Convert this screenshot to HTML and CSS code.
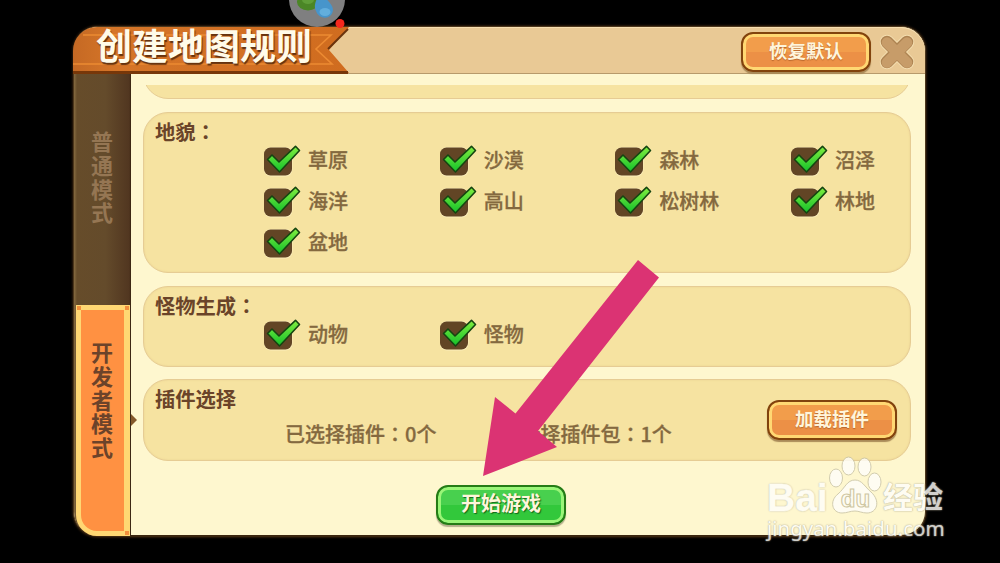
FILE: index.html
```html
<!DOCTYPE html>
<html lang="zh-CN">
<head>
    <meta charset="UTF-8">
    <meta name="viewport" content="width=device-width, initial-scale=1.0">
    <title>创建地图规则</title>
    <link rel="stylesheet" href="styles.css">
</head>
<body>

    <div class="dialog">
        <header class="top">
            <div class="banner">
                <svg class="banner-bg" width="276" height="47" viewBox="0 0 276 47">
                    <defs>
                        <linearGradient id="wood" x1="0" x2="1" y1="0" y2="0">
                            <stop offset="0" stop-color="#c56924"/>
                            <stop offset=".15" stop-color="#d57528"/>
                            <stop offset="1" stop-color="#d06c1f"/>
                        </linearGradient>
                    </defs>
                    <path d="M0 0H276L256 23L276 46H0Z" fill="url(#wood)"/>
                    <path d="M0 45.500H275" stroke="#773709" stroke-width="3"/>
                    <path d="M275 2L255 22" stroke="#69330e" stroke-width="2" fill="none"/>
                    <path d="M10 8H258L243 22L259 37H0" stroke="#ec8a32" stroke-width="1.6" fill="none"/>
                </svg>
                <h1>创建地图规则</h1>
            </div>
            <button class="btn btn-orange">恢复默认</button>
            <svg class="close" width="38" height="38" viewBox="0 0 38 38">
                <path d="M9 9L29 29M29 9L9 29" stroke="#f3dcae" stroke-width="14.500" stroke-linecap="round"/>
                <path d="M9 9L29 29M29 9L9 29" stroke="#ae8452" stroke-width="12.500" stroke-linecap="round"/>
                <path d="M9 9.500L29 29.500M29 9.500L9 29.500" stroke="#c79c69" stroke-width="10.500" stroke-linecap="round"/>
            </svg>
        </header>

        <div class="main">
            <nav class="tabs">
                <div class="tab tab-normal"><span>普通模式</span></div>
                <div class="tab tab-dev">
                    <i class="corner tl"></i><i class="corner tr"></i><i class="corner br"></i>
                    <span>开发者模式</span>
                </div>
            </nav>

            <div class="content">
                <div class="card-cut"></div>

                <section class="card card-land">
                    <h2>地貌<span class="colon" lang="zh-TW">：</span></h2>
                    <div class="checks" id="land"></div>
                </section>

                <section class="card card-mob">
                    <h2>怪物生成<span class="colon" lang="zh-TW">：</span></h2>
                    <div class="checks" id="mob"></div>
                </section>

                <section class="card card-plugin">
                    <h2>插件选择</h2>
                    <div class="plugin-row">
                        <p>已选择插件<span class="colon" lang="zh-TW">：</span>0个</p>
                        <p>已选择插件包<span class="colon" lang="zh-TW">：</span>1个</p>
                    </div>
                    <button class="btn btn-orange btn-load">加载插件</button>
                </section>

                <button class="btn btn-green">开始游戏</button>
            </div>
        </div>
    </div>

    <!-- floating ball -->
    <svg class="ball" width="64" height="32" viewBox="0 0 64 32">
        <circle cx="32" cy="-1" r="28" fill="#7f7f80"/>
        <ellipse cx="23" cy="2" rx="11" ry="8.500" fill="#4b8626"/>
        <ellipse cx="23" cy="0" rx="6" ry="4" fill="#5f9d38"/>
        <path d="M36 -8C29 2 29 7 31 11C34 20 47 20 48 10C48 4 41 0 36 -8Z" fill="#4795cb"/>
        <ellipse cx="40" cy="12" rx="5.500" ry="4" fill="#62aedd"/>
        <circle cx="55" cy="23.500" r="4.500" fill="#f5281e"/>
    </svg>

    <svg class="arrow" width="180" height="220" viewBox="0 0 180 220">
        <path d="M3 216L15 137L35.500 153.500L158 0L179 17.500L58 171L77 187Z" fill="#db3373"/>
    </svg>

    <div class="watermark">
        <div class="wm-logo">
            <span class="wm-bai">Bai</span>
            <svg class="paw" width="54" height="60" viewBox="0 0 54 60">
                <g fill="#fffefa" stroke="#c9c4a8" stroke-width="1">
                    <ellipse cx="8" cy="22" rx="6.500" ry="9"/>
                    <ellipse cx="20.500" cy="10" rx="6.500" ry="9"/>
                    <ellipse cx="36.500" cy="11" rx="6.500" ry="9"/>
                    <ellipse cx="46.500" cy="26" rx="6.500" ry="9"/>
                    <path d="M27 24C34 24 37 31 43 36C53 45 49 57 39 57C34 57 31 55 27 55C22 55 19 57 14 57C4 57 1 45 10 38C17 32 19 24 27 24Z"/>
                </g>
                <text x="27.500" y="51" text-anchor="middle" class="du">du</text>
            </svg>
            <span class="wm-jy">经验</span>
        </div>
        <div class="wm-url">jingyan.baidu.com</div>
    </div>

    <svg width="0" height="0" class="defs">
        <defs>
            <linearGradient id="green" x1="0" x2="0" y1="0" y2="1">
                <stop offset="0" stop-color="#82ee40"/>
                <stop offset="1" stop-color="#12c02a"/>
            </linearGradient>
        </defs>
    </svg>

    <script>
        const land = ["草原", "沙漠", "森林", "沼泽", "海洋", "高山", "松树林", "林地", "盆地"];
        const mob = ["动物", "怪物"];

        function fill(id, names) {
            const box = document.getElementById(id);
            names.forEach(name => {
                const item = document.createElement("label");
                item.className = "check";
                item.innerHTML = `<svg width="38" height="32" viewBox="0 0 38 32">
                    <rect x="1" y="2" width="28.500" height="29.500" rx="7" fill="#fbeebb"/>
                    <rect x="1" y="2.500" width="28" height="28" rx="6.500" fill="#624525"/>
                    <path d="M4.500 14.500L9 10L16 17L32.500 1.300L36.500 5.500L16.500 27Z" fill="url(#green)" stroke="#154510" stroke-width="1.6" stroke-linejoin="round"/>
                </svg><span>${name}</span>`;
                box.appendChild(item);
            });
        }

        fill("land", land);
        fill("mob", mob);
    </script>
</body>
</html>
```
FILE: styles.css
```css
* {
    box-sizing: border-box;
}

body {
    margin: 0;
    height: 563px;
    overflow: hidden;
    background-color: #000;
    font-family: "Noto Sans CJK SC", sans-serif;
    position: relative;
}

h1, h2, p {
    margin: 0;
}

.dialog {
    width: 853px;
    height: 511px;
    margin-left: 73px;
    margin-top: 26px;
    border-radius: 25px;
    display: flex;
    flex-direction: column;
    background-color: #fef7cf;
    border: 1px solid #4d371c;
    border-bottom: 2px solid #3b260f;
    box-shadow: 0 0 2px 1px #2a1a0b;
}

body::before {
    content: "";
    display: table;
}

/* header */
.top {
    height: 47px;
    flex: none;
    display: flex;
    align-items: center;
    background-color: #e9c995;
    border-bottom: 1px solid #b79a6b;
    border-top: 1px solid #f7deb0;
    border-radius: 24px 24px 0 0;
}

.banner {
    width: 276px;
    height: 47px;
    margin-right: auto;
    position: relative;
}

.banner-bg {
    position: absolute;
    left: -1px;
    top: 0;
    border-top-left-radius: 24px;
}

.banner h1 {
    position: relative;
    padding-left: 22px;
    font-size: 36px;
    line-height: 34px;
    font-weight: 700;
    color: #fffbe9;
    text-shadow: 1px 2px 1px #65320f;
    white-space: nowrap;
}

.close {
    margin: 3px 9px 0 7px;
}

.btn {
    width: 130px;
    height: 40px;
    padding: 0 0 5px;
    border-radius: 12px;
    font-family: inherit;
    font-size: 18.5px;
    font-weight: 700;
    line-height: 22px;
    color: #fff5db;
    white-space: nowrap;
}

.btn-orange {
    border: 2px solid #81430d;
    background: linear-gradient(#f29d4b 50%, #ec9046 50%);
    box-shadow: inset 0 0 0 3px #ffd873, 0 2px 1px #a98a58;
    text-shadow: 0 1px 1px #b7662c;
}

.top .btn {
    margin-top: 3px;
}

.btn-green {
    align-self: center;
    margin: 24px 0 0 -52px;
    border: 2px solid #257b16;
    background: linear-gradient(#48d04e 50%, #32c83b 50%);
    box-shadow: inset 0 0 0 3px #9af578, 0 2px 1px #b5ad8b;
    font-size: 20px;
    text-shadow: 1px 1px 1px #13681a;
}

/* left tabs */
.main {
    flex: 1;
    display: flex;
}

.tabs {
    width: 57px;
    flex: none;
    display: flex;
    flex-direction: column;
    background: linear-gradient(90deg, #856a40 0, #664c2a 3px, #644b2b 55%, #513620 97%, #35220f 100%);
    border-bottom-left-radius: 24px;
}

.tab {
    display: flex;
    justify-content: center;
    font-size: 22px;
    font-weight: 700;
    line-height: 22px;
}

.tab span {
    writing-mode: vertical-rl;
    letter-spacing: 1.7px;
}

.tab-normal {
    height: 231px;
    padding-top: 57px;
    padding-right: 1px;
    color: #957653;
}

.tab-dev {
    position: relative;
    height: 231px;
    width: 54px;
    margin-left: 2px;
    padding-top: 32px;
    padding-right: 1px;
    border: 5px solid #ffd773;
    border-right-width: 6px;
    border-bottom-left-radius: 21px;
    background-color: #ff9142;
    color: #6c432a;
}

.corner {
    position: absolute;
    width: 4px;
    height: 4px;
    background-color: #f28f3c;
}

.tl { left: -4px; top: -4px; }
.tr { right: -5px; top: -4px; }
.br { right: -5px; bottom: -4px; }

/* right side */
.content {
    flex: 1;
    display: flex;
    flex-direction: column;
    padding: 11px 15px 0 12px;
    position: relative;
}

/* pointer of the active tab */
.content::before {
    content: "";
    position: absolute;
    left: 0;
    top: 340px;
    border-left: 6px solid #84592b;
    border-top: 6px solid transparent;
    border-bottom: 6px solid transparent;
}

.card, .card-cut {
    width: 768px;
    background-color: #f6e3a1;
    border: 1px solid #e6cc94;
    border-radius: 25px;
}

.card-cut {
    height: 52px;
    flex: none;
    margin-top: -38px;
    margin-bottom: 13px;
    clip-path: inset(38px 0 0 0);
}

.card {
    flex: none;
    position: relative;
    padding: 6px 0 0 11px;
    box-shadow: inset 0 0 2px #e9d190;
}

.card h2 {
    font-size: 20.300px;
    line-height: 24px;
    font-weight: 700;
    color: #6a4429;
}

.colon {
    font-family: "Noto Sans CJK TC", sans-serif;
}

.card-land {
    height: 161px;
    margin-bottom: 13px;
}

.card-mob {
    height: 81px;
    margin-bottom: 12px;
}

.card-plugin {
    height: 82px;
}

.checks {
    display: grid;
    grid-template-columns: repeat(4, 175.7px);
    grid-auto-rows: 41px;
    margin: 2px -70px 0 108px;
}

.card-mob .checks {
    margin-top: 2px;
}

.check {
    display: flex;
    gap: 7px;
    height: 32px;
}

.check span {
    font-size: 20px;
    line-height: 29px;
    font-weight: 500;
    color: #84693f;
    -webkit-text-stroke: 0.3px #84693f;
}

.plugin-row {
    display: flex;
    gap: 64px;
    margin: 12px 0 0 130px;
}

.plugin-row p {
    font-size: 20px;
    line-height: 24px;
    font-weight: 500;
    color: #84693f;
    -webkit-text-stroke: 0.3px #84693f;
}

.btn-load {
    position: absolute;
    right: 13px;
    top: 20px;
}

/* things over the dialog */
.ball {
    position: absolute;
    left: 285px;
    top: 0;
}

.arrow {
    position: absolute;
    left: 480px;
    top: 260px;
}

.defs {
    position: absolute;
}

.watermark {
    position: absolute;
    left: 767px;
    top: 456px;
    width: 180px;
    color: #fffefa;
    opacity: 0.82;
    text-shadow: 0 0 1px #a5a088, 0 0 2px #b5b09a;
}

.wm-logo {
    display: flex;
    height: 60px;
    align-items: flex-end;
}

.wm-bai {
    width: 61px;
    font: 700 39px/37px "Liberation Sans", Arial, sans-serif;
    -webkit-text-stroke: 0.5px #fffefa;
}

.wm-jy {
    margin-left: 1px;
    font-size: 30px;
    line-height: 41px;
    font-weight: 700;
}

.du {
    font: 700 24px "Liberation Sans", Arial, sans-serif;
    fill: #fffefa;
    stroke: #c4bc98;
    stroke-width: 1.1;
    text-shadow: none;
}

.wm-url {
    font: 400 20.500px/24px "Noto Sans", sans-serif;
}
```
